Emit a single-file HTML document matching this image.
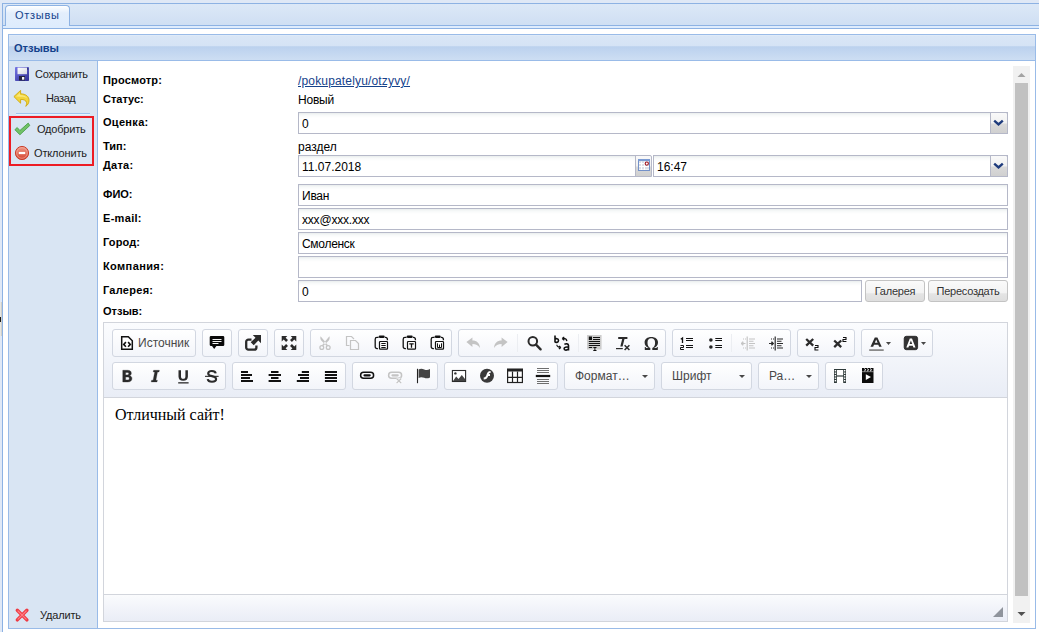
<!DOCTYPE html>
<html lang="ru">
<head>
<meta charset="utf-8">
<title>Отзывы</title>
<style>
html,body{margin:0;padding:0;}
body{width:1039px;height:632px;overflow:hidden;background:#dfe8f6;position:relative;font-family:"Liberation Sans",sans-serif;font-size:11px;color:#000;}
.a{position:absolute;box-sizing:border-box;}
.t{position:absolute;white-space:nowrap;line-height:14px;}
/* tab strip */
#tabhead{left:2px;top:3px;width:1037px;height:23px;border:1px solid #8db2e3;border-right:0;background:linear-gradient(#dce8f7,#cfdff3);}
#tabspacer{left:2px;top:25px;width:1037px;height:4px;border:1px solid #8db2e3;border-right:0;border-top:0;background:#deecfd;}
#tabspacer2{left:2px;top:25px;width:1037px;height:1px;background:#8db2e3;}
#tab{left:5px;top:5px;width:65px;height:21px;border:1px solid #8db2e3;border-bottom:0;border-radius:4px 4px 0 0;background:linear-gradient(#ffffff 0,#e3eefc 35%,#deecfd 100%);}
#tabbody{left:2px;top:29px;width:1037px;height:603px;border-left:1px solid #8db2e3;background:#fff;}
/* panel */
#phead{left:8px;top:34px;width:1028px;height:27px;border:1px solid #99bbe8;background:linear-gradient(#e4eefa 0,#d9e6f6 4%,#d5e3f5 43%,#bbd1ee 47%,#cddef3 100%);}
#pbody{left:8px;top:60px;width:1028px;height:569px;border:1px solid #99bbe8;border-top:0;background:#fff;}
#side{left:9px;top:61px;width:89px;height:567px;background:#d9e5f3;border-right:1px solid #99bbe8;}
.lbl{font-weight:bold;font-size:11px;left:103px;}
.val{font-size:12px;left:298px;}
.fld{left:298px;height:22px;border:1px solid #b5b8c8;background:linear-gradient(#e9eded 0,#f7f9f9 2px,#fff 5px);font-size:12px;line-height:20px;padding:1px 0 0 3px;white-space:nowrap;overflow:hidden;}
.btn{height:22px;border:1px solid #c3c3c3;border-radius:3px;background:linear-gradient(#fafafa 0,#f3f3f3 58%,#e4e4e4 64%,#dedede 100%);font-size:11px;text-align:center;line-height:20px;color:#333;letter-spacing:-.25px;}
.sb{color:#222;font-size:11px;}

.g{height:28px;border:1px solid #d2d7e1;border-radius:3px;background:linear-gradient(#ffffff,#f3f5fa);display:flex;}
.b{display:block;position:relative;width:28px;height:26px;flex:none;}
.i{position:absolute;left:6px;top:5px;width:16px;height:16px;overflow:visible;}
.sp{display:block;width:1px;height:18px;margin:4px 2px 0;background:#eceef2;flex:none;}
.bl{display:block;font-size:12px;line-height:26px;color:#484848;margin-left:-3px;padding-right:6px;white-space:nowrap;}
.ar{position:absolute;left:24px;top:12px;width:5px;height:3px;}
.bw{width:35px;}
.ct{display:block;font-size:12px;line-height:26px;color:#484848;padding-left:10px;white-space:nowrap;overflow:hidden;}
.co{display:block;position:relative;width:17px;height:26px;margin-left:2px;flex:none;}
.co:after{content:"";position:absolute;left:5px;top:12px;border:3px solid transparent;border-top-color:#474747;}

.trg{width:18px;height:22px;border:1px solid #b5b8c8;border-radius:0 2px 0 0;background:linear-gradient(#f9f9f9 0,#f1f1f1 50%,#d9d9d9 55%,#d0d0d0 100%);}
</style>
</head>
<body>
<div class="a" id="tabhead"></div>
<div class="a" id="tabbody"></div>
<div class="a" id="tabspacer"></div>
<div class="a" id="tabspacer2"></div>
<div class="a" id="tab"></div>
<div class="t" style="left:15px;top:8px;color:#15428b;font-size:11px;letter-spacing:.73px;">Отзывы</div>

<div class="a" id="pbody"></div>
<div class="a" id="phead"></div>
<div class="t" style="left:14px;top:41px;color:#15428b;font-size:11px;font-weight:bold;">Отзывы</div>
<div class="a" id="side"></div>

<!-- sidebar -->
<div class="t sb" style="left:35px;top:67px;letter-spacing:-.21px;">Сохранить</div>
<div class="t sb" style="left:46px;top:91px;letter-spacing:-.44px;">Назад</div>
<div class="a" style="left:16px;top:113px;width:74px;height:2px;background:linear-gradient(#9ec3ee 50%,#eaf2fb 50%);"></div>
<div class="a" style="left:9px;top:116px;width:85px;height:50px;border:2px solid #ed1c24;"></div>
<div class="t sb" style="left:37px;top:122px;letter-spacing:-.2px;">Одобрить</div>
<div class="t sb" style="left:34px;top:146px;letter-spacing:-.14px;">Отклонить</div>
<div class="t sb" style="left:40px;top:608px;letter-spacing:-.16px;">Удалить</div>


<!-- sidebar icons -->
<svg class="a" style="left:14px;top:66px;" width="16" height="16" viewBox="0 0 16 16"><defs><linearGradient id="sv" x1="0" y1="0" x2="1" y2="1"><stop offset="0" stop-color="#7676e6"/><stop offset="1" stop-color="#2e2e92"/></linearGradient><linearGradient id="sw" x1="0" y1="0" x2="1" y2="1"><stop offset="0" stop-color="#ffffff"/><stop offset="1" stop-color="#d4d7e0"/></linearGradient></defs><rect x="1" y="1" width="14" height="14" rx=".8" fill="url(#sv)"/><rect x="3.500" y="1.600" width="9.500" height="6.600" fill="url(#sw)"/><rect x="5" y="10" width="6" height="4.500" fill="#23233f"/><rect x="8" y="11" width="2.300" height="2.700" fill="#f2f2f6"/><rect x="13.300" y="2.300" width=".9" height="1.200" fill="#23233f"/></svg>
<svg class="a" style="left:13px;top:90px;" width="17" height="17" viewBox="0 0 17 17"><path d="M.9 6.600L7.600 .4v3.400c5.400.1 8.400 2.800 8.400 6.600 0 2.700-1.300 4.700-3.300 5.900.8-1.500 1.100-2.700.8-3.900-.5-2-2.300-3-5.900-3v3.800z" fill="#f2d43a" stroke="#cfa90f" stroke-width=".9" stroke-linejoin="round"/><path d="M3 6.600l4-3.600v1.900c3.800 0 6.300 1.400 7.300 3.500-1.500-1.300-3.600-1.800-7.300-1.700z" fill="#faec8c" opacity=".8"/></svg>
<svg class="a" style="left:14px;top:121px;" width="17" height="16" viewBox="0 0 17 16"><path d="M.9 8.700L3.200 6.500l2.700 3L14.200 2.100l1.600 2.400L5.900 13.800z" fill="#72c268" stroke="#3f9b3f" stroke-width=".8" stroke-linejoin="round"/></svg>
<svg class="a" style="left:14px;top:145px;" width="16" height="16" viewBox="0 0 16 16"><defs><linearGradient id="st" x1="0" y1="0" x2="0" y2="1"><stop offset="0" stop-color="#f09a88"/><stop offset="1" stop-color="#d4432f"/></linearGradient></defs><circle cx="8" cy="8" r="6.600" fill="url(#st)" stroke="#c9412e" stroke-width="1"/><circle cx="8" cy="8" r="5.300" fill="none" stroke="#f6b5a8" stroke-width=".7" opacity=".8"/><rect x="4.800" y="6.900" width="6.400" height="2.200" fill="#fff"/></svg>
<svg class="a" style="left:14px;top:607px;" width="16" height="16" viewBox="0 0 16 16"><path d="M3.300 3.300l9.600 9.600M12.900 3.300L3.300 12.900" stroke="#ee3a43" stroke-width="3.400" stroke-linecap="round"/><path d="M4 4l8.200 8.200M12.200 4L4 12.200" stroke="#ff7c84" stroke-width="1.200" stroke-linecap="round"/></svg>

<!-- form -->
<div class="t lbl" style="top:73px;letter-spacing:.17px;">Просмотр:</div>
<div class="t val" style="top:74px;color:#15428b;text-decoration:underline;letter-spacing:.165px;">/pokupatelyu/otzyvy/</div>
<div class="t lbl" style="top:92px;">Статус:</div>
<div class="t val" style="top:93px;letter-spacing:-.2px;">Новый</div>
<div class="t lbl" style="top:115px;letter-spacing:.31px;">Оценка:</div>
<div class="a fld" style="top:112px;width:710px;">0</div>
<div class="t lbl" style="top:139px;">Тип:</div>
<div class="t val" style="top:140px;">раздел</div>
<div class="t lbl" style="top:158px;letter-spacing:.26px;">Дата:</div>
<div class="a fld" style="top:155px;width:338px;">11.07.2018</div>
<div class="a fld" style="left:653px;top:155px;width:355px;">16:47</div>
<div class="t lbl" style="top:187px;">ФИО:</div>
<div class="a fld" style="top:184px;width:710px;letter-spacing:-.25px;">Иван</div>
<div class="t lbl" style="top:211px;letter-spacing:.31px;">E-mail:</div>
<div class="a fld" style="top:208px;width:710px;letter-spacing:-.19px;">xxx@xxx.xxx</div>
<div class="t lbl" style="top:235px;letter-spacing:.12px;">Город:</div>
<div class="a fld" style="top:232px;width:710px;letter-spacing:-.3px;">Смоленск</div>
<div class="t lbl" style="top:259px;letter-spacing:.39px;">Компания:</div>
<div class="a fld" style="top:256px;width:710px;"></div>
<div class="t lbl" style="top:283px;letter-spacing:.27px;">Галерея:</div>
<div class="a fld" style="top:280px;width:564px;">0</div>
<div class="a btn" style="left:865px;top:280px;width:60px;">Галерея</div>
<div class="a btn" style="left:928px;top:280px;width:80px;">Пересоздать</div>
<div class="t lbl" style="top:304px;">Отзыв:</div>


<!-- triggers -->
<div class="a trg" style="left:990px;top:112px;"></div>
<svg class="a" style="left:993px;top:119px;" width="11" height="8" viewBox="0 0 11 8"><path d="M1.200 1.600L5.500 5.400 9.800 1.600" fill="none" stroke="#1e3b7c" stroke-width="2.400"/></svg>
<div class="a trg" style="left:990px;top:155px;"></div>
<svg class="a" style="left:993px;top:162px;" width="11" height="8" viewBox="0 0 11 8"><path d="M1.200 1.600L5.500 5.400 9.800 1.600" fill="none" stroke="#1e3b7c" stroke-width="2.400"/></svg>
<div class="a trg" style="left:635px;top:155px;width:17px;"></div>
<svg class="a" style="left:638px;top:159px;" width="12" height="12" viewBox="0 0 12 12"><rect x=".5" y=".5" width="11" height="11" fill="#dcdfe7" stroke="#7391c9"/><rect x="0" y="0" width="12" height="2" fill="#7b9bd3"/><path d="M3.500 2.500v8.500M6.500 2.500v8.500M1 4.500h10M1 7.500h10" stroke="#fff" stroke-width="1"/><path d="M1 10.500h10" stroke="#fff" stroke-width="1" opacity=".6"/><circle cx="8.800" cy="4.600" r="1.600" fill="#fff" stroke="#a0141e" stroke-width="1.100"/></svg>

<!-- editor -->
<div class="a" id="ed" style="left:103px;top:322px;width:905px;height:300px;border:1px solid #d2d5dc;background:#fff;"></div>
<div class="a" id="edtop" style="left:104px;top:323px;width:903px;height:75px;background:linear-gradient(#fbfcfe,#e9edf6);border-bottom:1px solid #d2d5dc;"></div>
<div class="a" id="edbot" style="left:104px;top:594px;width:903px;height:27px;background:linear-gradient(#fafbfd,#eaedf6);border-top:1px solid #d2d5dc;"></div>
<div class="t" style="left:115px;top:405px;font-family:'Liberation Serif',serif;font-size:16px;line-height:20px;color:#000;">Отличный сайт!</div>

<!-- TOOLBAR -->
<div class="a g" style="left:112px;top:329px;"><span class="b"><svg class="i" viewBox="0 0 16 16" ><path d="M2.700 1.700h6.600l4 4v8.600H2.700z" fill="#fff" stroke="#111" stroke-width="1.500"/><path d="M6.900 7.100L4.700 9.400l2.200 2.300M9.100 7.100l2.200 2.300-2.200 2.300" fill="none" stroke="#111" stroke-width="1.600"/></svg></span><span class="bl">Источник</span></div>
<div class="a g" style="left:202px;top:329px;"><span class="b"><svg class="i" viewBox="0 0 16 16" ><path d="M2 1h12a1.300 1.300 0 0 1 1.300 1.300v7.400A1.300 1.300 0 0 1 14 11H7.400L5.200 13.900 3 11H2A1.300 1.300 0 0 1 .7 9.700V2.300A1.300 1.300 0 0 1 2 1z" fill="#0a0a0a"/><path d="M3.500 4.500h9M3.500 6.500h9M3.500 8.500h6" stroke="#f4f4f4" stroke-width="1"/></svg></span></div>
<div class="a g" style="left:238px;top:329px;"><span class="b"><svg class="i" viewBox="0 0 16 16" ><path d="M6.500 4.600H3.400A2.200 2.200 0 0 0 1.200 6.800v5.600a2.200 2.200 0 0 0 2.200 2.200h5.800a2.200 2.200 0 0 0 2.200-2.200V10.400" fill="none" stroke="#2b2b2b" stroke-width="2.300"/><path d="M7.800 0H16v8.200l-2.700-2.700-4.600 4.800-3-3 4.800-4.600z" fill="#2b2b2b"/></svg></span></div>
<div class="a g" style="left:274px;top:329px;"><span class="b"><svg class="i" viewBox="0 0 16 16" ><g fill="#2b2b2b"><path d="M.7 1h5.600L4.600 2.700 7 5.100 5.100 7 2.700 4.600 .7 6.600z"/><path d="M15.300 1v5.600l-2-2L10.900 7 9 5.100l2.400-2.400L9.700 1z"/><path d="M.7 15V9.400l2 2L5.100 9 7 10.900l-2.400 2.400L6.300 15z"/><path d="M15.300 15H9.700l1.700-1.700L9 10.900 10.900 9l2.400 2.400 2-2z"/></g></svg></span></div>
<div class="a g" style="left:310px;top:329px;"><span class="b"><svg class="i" viewBox="0 0 16 16" ><g fill="none" stroke="#c4c4c4" stroke-width="1.300"><circle cx="4.800" cy="12.500" r="1.900"/><circle cx="11.200" cy="12.500" r="1.900"/></g><path d="M3.600 1.200c-.5 1.500-.3 3 .6 4.300L10 11.200l1-.9zM12.400 1.200c.5 1.500.3 3-.6 4.300L6 11.200l-1-.9z" fill="#c4c4c4"/></svg></span><span class="b"><svg class="i" viewBox="0 0 16 16" ><g fill="none" stroke="#c4c4c4" stroke-width="1.200"><path d="M4.500 10.500h-3v-9h5l2.500 2.500"/><path d="M5.500 5.500h5l3 3v6h-8z"/></g></svg></span><span class="b"><svg class="i" viewBox="0 0 16 16" ><path d="M5.600 2.400H4A1.800 1.800 0 0 0 2.200 4.200v7.600A1.800 1.800 0 0 0 4 13.600h.9M11.800 2.400h.8a1.800 1.800 0 0 1 1.800 1.800v1" fill="none" stroke="#111" stroke-width="1.300"/><rect x="5.700" y=".5" width="6" height="2.400" rx="1.100" fill="#111"/><rect x="6.500" y="6.500" width="8" height="7.700" rx=".8" fill="#fff" stroke="#111" stroke-width="1.200"/><path d="M8.300 8.500h4.400M8.300 10.500h4.400M8.300 12.500h4.400" stroke="#111" stroke-width="1"/></svg></span><span class="b"><svg class="i" viewBox="0 0 16 16" ><path d="M5.600 2.400H4A1.800 1.800 0 0 0 2.200 4.200v7.600A1.800 1.800 0 0 0 4 13.600h.9M11.800 2.400h.8a1.800 1.800 0 0 1 1.800 1.800v1" fill="none" stroke="#111" stroke-width="1.300"/><rect x="5.700" y=".5" width="6" height="2.400" rx="1.100" fill="#111"/><rect x="6.500" y="6.500" width="8" height="7.700" rx=".8" fill="#fff" stroke="#111" stroke-width="1.200"/><path d="M8.300 8.800h4.400M10.500 8.800v4" stroke="#111" stroke-width="1.300" fill="none"/></svg></span><span class="b"><svg class="i" viewBox="0 0 16 16" ><path d="M5.600 2.400H4A1.800 1.800 0 0 0 2.200 4.200v7.600A1.800 1.800 0 0 0 4 13.600h.9M11.800 2.400h.8a1.800 1.800 0 0 1 1.800 1.800v1" fill="none" stroke="#111" stroke-width="1.300"/><rect x="5.700" y=".5" width="6" height="2.400" rx="1.100" fill="#111"/><rect x="6.500" y="6.500" width="8" height="7.700" rx=".8" fill="#fff" stroke="#111" stroke-width="1.200"/><path d="M8.500 8.300v4.200h4V8.300M10.500 9.600v2.900" fill="none" stroke="#111" stroke-width="1"/></svg></span></div>
<div class="a g" style="left:458px;top:329px;"><span class="b"><svg class="i" viewBox="0 0 16 16" ><path d="M1.400 7L7.400 2.600v2.900c4.400 0 7.300 2.600 7.600 7.500-1.700-2.700-4-3.900-7.600-3.900v2.900z" fill="#c4c4c4"/></svg></span><span class="b"><svg class="i" viewBox="0 0 16 16" ><path d="M14.600 7L8.600 2.600v2.900c-4.400 0-7.300 2.600-7.600 7.500 1.700-2.700 4-3.900 7.600-3.900v2.900z" fill="#c4c4c4"/></svg></span><span class="sp"></span><span class="b"><svg class="i" viewBox="0 0 16 16" ><circle cx="6.800" cy="6.300" r="4.300" fill="none" stroke="#2b2b2b" stroke-width="2"/><path d="M10 9.700l4.600 4.600" stroke="#2b2b2b" stroke-width="2.400" stroke-linecap="round"/></svg></span><span class="b"><svg class="i" viewBox="0 0 16 16" ><g fill="none" stroke="#111"><path d="M1 .6v7M1 4.400c.7-1.100 3.500-1.200 3.500 1.100S1.700 7.800 1 6.600" stroke-width="1.600"/><path d="M10.400 9.400c1.400-.9 4.100-.9 4.100 1v5.200M14.500 12.300c-1.900-.5-4.400-.3-4.400 1.500 0 1.800 3.300 1.700 4.400.2" stroke-width="1.600"/><path d="M8.300 3.500c2.400-.3 4.300.7 4.600 2.600M8.100 3.500l2.200-1.600M8.100 3.500l2.200 1.700M2.800 9.800c.2 1.800 1.600 2.600 3.800 2.600M6.900 12.400L4.900 11M6.900 12.400l-2 1.500" stroke-width="1.200"/></g></svg></span><span class="sp"></span><span class="b"><svg class="i" viewBox="0 0 16 16" ><rect x="0" y="0" width="14.600" height="14.500" fill="#cdcdcd"/><rect x="1.800" y="1.500" width="3.200" height="3.500" fill="#111"/><path d="M6 2.500h7M6 4.500h7M1.800 6.500h11.200M1.800 8.500h11.200M1.800 10.500h11.200M1.800 12.500h3.400" stroke="#111" stroke-width="1"/><path d="M6.300 12.500h3.200M6.300 15.500h3.200M7.900 12.500v3" stroke="#111" stroke-width="1"/></svg></span><span class="b"><svg class="i" viewBox="0 0 16 16" ><path d="M3.200 2h9.200v1.900H9.500L7.600 11.600H5.300l1.900-7.700H3.200z" fill="#2b2b2b"/><path d="M1 13.600h6.800" stroke="#2b2b2b" stroke-width="1.200"/><path d="M9.600 10.200l4.800 4.800M14.400 10.200L9.600 15" stroke="#2b2b2b" stroke-width="1.500"/></svg></span><span class="b"><svg class="i" viewBox="0 0 16 16" ><path d="M1.800 15v-3h.9c.1.700.3 1 1 1h1.900C3 11.800 1.600 9.900 1.600 7.500 1.600 4.100 4.300 2 8.300 2s6.700 2.100 6.700 5.500c0 2.400-1.400 4.300-4 5.500h1.900c.7 0 .9-.3 1-1h.9v3H9.300v-2c1.900-1 2.800-2.800 2.800-5.300 0-2.900-1.300-4.500-3.800-4.500S4.500 4.800 4.500 7.700c0 2.500.9 4.300 2.800 5.300v2z" fill="#2b2b2b"/></svg></span></div>
<div class="a g" style="left:672px;top:329px;"><span class="b"><svg class="i" viewBox="0 0 16 16" ><path d="M1.800 4.200l1.700-1.200V8" fill="none" stroke="#111" stroke-width="1.300"/><path d="M1.500 10.500h3v2h-3v2h3.400" fill="none" stroke="#111" stroke-width="1"/><path d="M7 3.500h7M7 5.500h7M7 10.500h7M7 12.500h7" stroke="#111" stroke-width="1"/></svg></span><span class="b"><svg class="i" viewBox="0 0 16 16" ><circle cx="3.900" cy="5" r="1.800" fill="#222"/><circle cx="3.900" cy="12" r="1.800" fill="#222"/><path d="M8.300 3.500h6.700M8.300 5.500h6.700M8.300 10.500h6.700M8.300 12.500h6.700" stroke="#111" stroke-width="1"/></svg></span><span class="sp"></span><span class="b"><svg class="i" viewBox="0 0 16 16" ><path d="M1.200 8.500h4.300M1 8.500l2-1.800v3.600z" stroke="#c4c4c4" stroke-width="1" fill="#c4c4c4"/><path d="M7.200 1.500v14" stroke="#c4c4c4" stroke-width="1.200"/><path d="M9 4h6M9 6.200h4.500M9 8.500h6M9 10.800h4.500M9 13h6" stroke="#c4c4c4" stroke-width="1.100"/><path d="M3 4h1M5 4h1M3 13h1M5 13h1" stroke="#c4c4c4" stroke-width="1"/></svg></span><span class="b"><svg class="i" viewBox="0 0 16 16" ><path d="M1 8.500h4M5.800 8.500l-2-1.800v3.600z" stroke="#2b2b2b" stroke-width="1" fill="#2b2b2b"/><path d="M7.200 1.500v14" stroke="#2b2b2b" stroke-width="1.200"/><path d="M9 4h6M9 6.200h4.500M9 8.500h6M9 10.800h4.500M9 13h6" stroke="#2b2b2b" stroke-width="1.100"/><path d="M3 4h1M5 4h1M3 13h1M5 13h1" stroke="#2b2b2b" stroke-width="1"/></svg></span></div>
<div class="a g" style="left:797px;top:329px;"><span class="b"><svg class="i" viewBox="0 0 16 16" ><path d="M2.200 4l7 6.600M9.200 4l-7 6.600" stroke="#2b2b2b" stroke-width="2.300"/><path d="M11 10.500h3v2h-3v2.500h3.400" fill="none" stroke="#111" stroke-width="1.100"/></svg></span><span class="b"><svg class="i" viewBox="0 0 16 16" ><path d="M2.200 5.5l7 6.600M9.200 5.5l-7 6.600" stroke="#2b2b2b" stroke-width="2.300"/><path d="M11 2.500h3v2h-3v2h3.400" fill="none" stroke="#111" stroke-width="1.100"/></svg></span></div>
<div class="a g" style="left:861px;top:329px;"><span class="b bw"><svg class="i" viewBox="0 0 16 16" ><path d="M2.500 11.800L6.800 2.400h2.600l4.300 9.400h-2.600l-.8-2H6l-.8 2zM6.800 7.800h2.800L8.200 4.400z" fill="#2b2b2b"/><rect x="1.200" y="14.200" width="14.500" height="1.800" fill="#8a8a8a"/></svg><svg class="ar" viewBox="0 0 5 3"><path d="M0 0h5L2.500 3z" fill="#474747"/></svg></span><span class="b bw"><svg class="i" viewBox="0 0 16 16" ><rect x="1.200" y="1.300" width="13.400" height="13.400" rx="2.200" fill="#333" stroke="#1c1c1c" stroke-width=".8"/><path d="M3.300 12.600L6.800 3.500h2.200l3.500 9.100h-2.100l-.6-1.900H6l-.6 1.900zM6.600 9h2.600L7.900 5.400z" fill="#fff"/></svg><svg class="ar" viewBox="0 0 5 3"><path d="M0 0h5L2.500 3z" fill="#474747"/></svg></span></div>
<div class="a g" style="left:112px;top:362px;"><span class="b"><svg class="i" viewBox="0 0 16 16" ><path d="M3.800 2.300h4.800c2.400 0 3.700 1 3.700 2.900 0 1.300-.7 2.100-1.800 2.500 1.500.3 2.400 1.300 2.400 2.800 0 2.200-1.500 3.400-4.100 3.400H3.800zm2.800 2.100v2.500h1.700c1 0 1.500-.4 1.500-1.300s-.6-1.200-1.600-1.200zm0 4.600v2.900h2c1.100 0 1.700-.5 1.700-1.500s-.7-1.400-1.800-1.400z" fill="#2b2b2b" stroke="#2b2b2b" stroke-width=".4"/></svg></span><span class="b"><svg class="i" viewBox="0 0 16 16" ><path d="M6.600 2.300h5.800l-.4 1.700h-1.500l-1.600 8.200h1.500l-.4 1.700H4.200l.4-1.700h1.500l1.600-8.200H6.200z" fill="#2b2b2b" stroke="#2b2b2b" stroke-width=".3"/></svg></span><span class="b"><svg class="i" viewBox="0 0 16 16" ><path d="M3.500 2.300h2.500v6.200c0 1.600.7 2.300 2.200 2.300s2.200-.7 2.200-2.300V2.300h2.500v6.300c0 2.800-1.600 4.200-4.700 4.200S3.500 11.400 3.500 8.600z" fill="#2b2b2b"/><rect x="3.200" y="14.200" width="10.400" height="1.300" fill="#2b2b2b"/></svg></span><span class="b"><svg class="i" viewBox="0 0 16 16" ><path d="M12.700 5.400C12.400 3.700 11 3 8.900 3 6.700 3 5.200 3.900 5.200 5.500c0 1.500 1.300 2.100 3.700 2.600 2.700.6 4.200 1.300 4.200 3 0 1.700-1.600 2.700-4.100 2.700-2.400 0-4-.9-4.300-2.700" fill="none" stroke="#2b2b2b" stroke-width="2.100"/><rect x="2" y="7.800" width="13.600" height="1.100" fill="#2b2b2b"/></svg></span></div>
<div class="a g" style="left:232px;top:362px;"><span class="b"><svg class="i" viewBox="0 0 16 16" ><rect x="2" y="3" width="7" height="2" fill="#111"/><rect x="2" y="6" width="11" height="2" fill="#111"/><rect x="2" y="9" width="9" height="2" fill="#111"/><rect x="2" y="12" width="12" height="2" fill="#111"/></svg></span><span class="b"><svg class="i" viewBox="0 0 16 16" ><rect x="4" y="3" width="7.5" height="2" fill="#111"/><rect x="1.6" y="6" width="12.4" height="2" fill="#111"/><rect x="4" y="9" width="7.5" height="2" fill="#111"/><rect x="1.6" y="12" width="12.4" height="2" fill="#111"/></svg></span><span class="b"><svg class="i" viewBox="0 0 16 16" ><rect x="6.8" y="3" width="7.2" height="2" fill="#111"/><rect x="3" y="6" width="11" height="2" fill="#111"/><rect x="5" y="9" width="9" height="2" fill="#111"/><rect x="1.8" y="12" width="12.2" height="2" fill="#111"/></svg></span><span class="b"><svg class="i" viewBox="0 0 16 16" ><rect x="1.9" y="3" width="12.1" height="2" fill="#111"/><rect x="1.9" y="6" width="12.1" height="2" fill="#111"/><rect x="1.9" y="9" width="12.1" height="2" fill="#111"/><rect x="1.9" y="12" width="12.1" height="2" fill="#111"/></svg></span></div>
<div class="a g" style="left:352px;top:362px;"><span class="b"><svg class="i" viewBox="0 0 16 16" ><rect x="1.600" y="4.300" width="13" height="6" rx="3" fill="none" stroke="#111" stroke-width="1.500"/><rect x="4.400" y="6.150" width="7.400" height="2.300" rx="1.100" fill="#111"/></svg></span><span class="b"><svg class="i" viewBox="0 0 16 16" ><rect x="1.600" y="4.300" width="13" height="6" rx="3" fill="none" stroke="#c4c4c4" stroke-width="1.500"/><rect x="4.400" y="6.150" width="7.400" height="2.300" rx="1.100" fill="#c4c4c4"/><path d="M9.600 10.500l4.600 4.600M14.200 10.500l-4.600 4.600" stroke="#fbfcfe" stroke-width="3"/><path d="M9.600 10.500l4.600 4.600M14.200 10.500l-4.600 4.600" stroke="#c4c4c4" stroke-width="1.300"/></svg></span><span class="b"><svg class="i" viewBox="0 0 16 16" ><path d="M2.500 .8v14.400" stroke="#222" stroke-width="1.100"/><path d="M3.600 1.600c2-1.300 3.700-.9 5.600-.2s3.700.8 5.800-.4v8.400c-2.100 1.200-3.900 1.100-5.800.4s-3.600-1.100-5.600.2z" fill="#444"/></svg></span></div>
<div class="a g" style="left:444px;top:362px;"><span class="b"><svg class="i" viewBox="0 0 16 16" ><rect x="1.400" y="2.500" width="13.200" height="11" fill="#fff" stroke="#2b2b2b" stroke-width="1.100"/><path d="M2 13l3.200-4.600 2.300 2.600 3.300-4 3.400 4.200V13z" fill="#444"/><circle cx="4.400" cy="5.400" r="1.200" fill="#333"/></svg></span><span class="b"><svg class="i" viewBox="0 0 16 16" ><circle cx="8" cy="7.800" r="7" fill="#3a3a3a"/><path d="M11.600 3.100c-2.500 0-3.400 1.600-4.100 3.600-.4 1.200-.8 2.800-2.800 2.800v2.100c2.900 0 3.900-1.900 4.500-3.600h1.800V6h-1.200c.4-.7.800-.9 1.800-.9z" fill="#fff"/></svg></span><span class="b"><svg class="i" viewBox="0 0 16 16" ><rect x=".6" y="1.300" width="14.800" height="13.200" fill="#fff" stroke="#222" stroke-width="1.200"/><rect x="0" y=".7" width="16" height="2.800" fill="#222"/><path d="M.6 9.300h14.800M5.500 3.500v11M10.500 3.500v11" stroke="#222" stroke-width="1.200"/></svg></span><span class="b"><svg class="i" viewBox="0 0 16 16" ><path d="M2 .5h12M2 2.500h12M2 4.500h12M2 11.500h12M2 13.500h12M2 15.500h12" stroke="#6e6e6e" stroke-width="1"/><rect x=".8" y="6.900" width="14.400" height="2.200" fill="#111"/></svg></span></div>
<div class="a g" style="left:564px;top:362px;"><span class="ct" style="width:60px">Формат…</span><span class="co"></span></div>
<div class="a g" style="left:661px;top:362px;"><span class="ct" style="width:60px">Шрифт</span><span class="co"></span></div>
<div class="a g" style="left:758px;top:362px;"><span class="ct" style="width:30px">Ра…</span><span class="co"></span></div>
<div class="a g" style="left:825px;top:362px;"><span class="b"><svg class="i" viewBox="0 0 16 16" ><rect x="2" y="1" width="12" height="14" fill="#2f3a3a"/><rect x="4.900" y="2" width="6.300" height="5.400" fill="#fff"/><rect x="4.900" y="8.600" width="6.300" height="5.400" fill="#fff"/><rect x="2.7" y="2" width="1.400" height="1.400" fill="#fff"/><rect x="2.7" y="4.5" width="1.400" height="1.400" fill="#fff"/><rect x="2.7" y="7" width="1.400" height="1.400" fill="#fff"/><rect x="2.7" y="9.5" width="1.400" height="1.400" fill="#fff"/><rect x="2.7" y="12" width="1.400" height="1.400" fill="#fff"/><rect x="12" y="2" width="1.400" height="1.400" fill="#fff"/><rect x="12" y="4.5" width="1.400" height="1.400" fill="#fff"/><rect x="12" y="7" width="1.400" height="1.400" fill="#fff"/><rect x="12" y="9.5" width="1.400" height="1.400" fill="#fff"/><rect x="12" y="12" width="1.400" height="1.400" fill="#fff"/><rect x="4.900" y="14" width="6.300" height="1" fill="#fff"/></svg></span><span class="b"><svg class="i" viewBox="0 0 16 16" ><path d="M2 0h11.500v15H2z" fill="#0c0c0c"/><path d="M4.300 .6l1.500 1.200-1.500 1.200M7.200 .6l1.500 1.200-1.500 1.200M10.100 .6l1.500 1.200-1.500 1.200" stroke="#fff" stroke-width="1" fill="none"/><path d="M2 3.700h11.500" stroke="#fff" stroke-width=".5"/><path d="M5.800 6.200l5.200 2.900-5.200 2.900z" fill="#fff"/></svg></span></div>
<!-- /TOOLBAR -->
<!-- scrollbar -->
<div class="a" style="left:1013px;top:66px;width:17px;height:557px;background:#f1f1f1;"></div>
<div class="a" style="left:1015px;top:83px;width:13px;height:513px;background:#c1c1c1;"></div>

<svg class="a" style="left:1017px;top:72px;" width="9" height="6" viewBox="0 0 9 6"><path d="M.5 5L4.500 1 8.500 5z" fill="#a3a3a3"/></svg>
<svg class="a" style="left:1017px;top:611px;" width="9" height="6" viewBox="0 0 9 6"><path d="M.5 1L4.500 5 8.500 1z" fill="#505050"/></svg>
<svg class="a" style="left:993px;top:607px;" width="10" height="10" viewBox="0 0 10 10"><path d="M10 0V10H0z" fill="#8f949c"/></svg>
<div class="a" style="left:0;top:302px;width:2px;height:34px;background:#e6e6e2;border-right:1px solid #cfcfca;"></div>
<div class="a" style="left:0;top:317px;width:1px;height:5px;background:#1a1a1a;"></div>
</body>
</html>
